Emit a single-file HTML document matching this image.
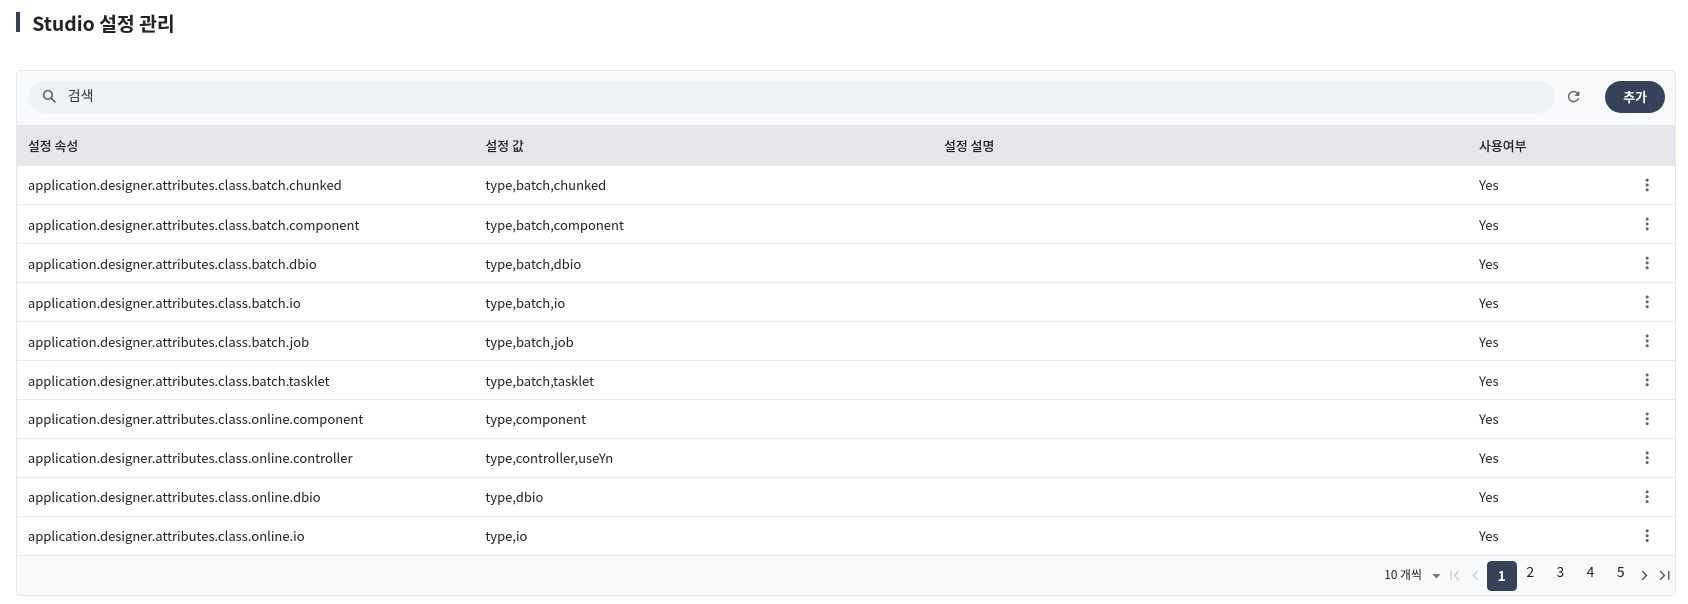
<!DOCTYPE html>
<html><head><meta charset="utf-8"><style>
*{box-sizing:border-box;margin:0;padding:0}
body{width:1688px;height:604px;background:#fff;font-family:"Noto Sans CJK KR","Liberation Sans",sans-serif;color:#222;position:relative;overflow:hidden}
.wrap{position:absolute;left:0;top:0;width:1568px;height:561px;zoom:1.0765}
.bar{position:absolute;left:15px;top:11px;width:4px;height:19px;background:#354259}
.title{position:absolute;left:30px;top:8px;font-size:18px;font-weight:700;color:#222;line-height:26px}
.card{position:absolute;left:15px;top:65px;width:1542px;height:489px;border:1px solid #e3e6ea;border-radius:5px;background:#f8f9fb;overflow:hidden}
.search{position:absolute;left:10px;top:9px;width:1419px;height:30px;background:#eef2f7;border-radius:15px}
.search span{position:absolute;left:37px;top:5px;font-size:13px;color:#333}
.add{position:absolute;left:1475px;top:9px;width:56px;height:30px;background:#354259;border-radius:15px;color:#fff;font-size:12px;font-weight:700;text-align:center;line-height:30px}
table{position:absolute;left:0;top:50px;width:1540px;border-collapse:collapse;font-size:12.1px}
th{background:#e5e7eb;height:38px;text-align:left;font-weight:500;font-size:12px;color:#222;padding-left:10px}
td{background:#fff;height:36.2px;padding-left:10px;border-bottom:1px solid #e8ecf0;color:#222}
.pg{position:absolute;top:456px;font-size:13px;color:#222}
.p1{position:absolute;left:1365px;top:455px;width:28px;height:28px;background:#354259;border-radius:4px;color:#fff;font-weight:700;text-align:center;line-height:28px;font-size:13px}
</style></head><body>
<div class="wrap">
<div class="bar"></div><div class="title">Studio 설정 관리</div>
<div class="card">
<div class="search"><svg style="position:absolute;left:13px;top:8px" width="14" height="14" viewBox="0 0 14 14"><circle cx="5.5" cy="5.5" r="4" fill="none" stroke="#666" stroke-width="1.5"/><path d="M8.5 8.5L12.5 12.5" stroke="#666" stroke-width="1.6"/></svg><span>검색</span></div>
<svg style="position:absolute;left:1438px;top:16px" width="16" height="16" viewBox="0 0 24 24"><path d="M17.65 6.35A7.96 7.96 0 0 0 12 4a8 8 0 1 0 7.73 10h-2.08A6 6 0 1 1 12 6c1.66 0 3.14.69 4.22 1.78L13 11h7V4l-2.35 2.35z" fill="#666"/></svg>
<div class="add">추가</div>
<table>
<tr><th style="width:425px">설정 속성</th><th style="width:426px">설정 값</th><th style="width:497px">설정 설명</th><th>사용여부</th></tr>
<tr><td>application.designer.attributes.class.batch.chunked</td><td>type,batch,chunked</td><td></td><td>Yes</td></tr>
<tr><td>application.designer.attributes.class.batch.component</td><td>type,batch,component</td><td></td><td>Yes</td></tr>
<tr><td>application.designer.attributes.class.batch.dbio</td><td>type,batch,dbio</td><td></td><td>Yes</td></tr>
<tr><td>application.designer.attributes.class.batch.io</td><td>type,batch,io</td><td></td><td>Yes</td></tr>
<tr><td>application.designer.attributes.class.batch.job</td><td>type,batch,job</td><td></td><td>Yes</td></tr>
<tr><td>application.designer.attributes.class.batch.tasklet</td><td>type,batch,tasklet</td><td></td><td>Yes</td></tr>
<tr><td>application.designer.attributes.class.online.component</td><td>type,component</td><td></td><td>Yes</td></tr>
<tr><td>application.designer.attributes.class.online.controller</td><td>type,controller,useYn</td><td></td><td>Yes</td></tr>
<tr><td>application.designer.attributes.class.online.dbio</td><td>type,dbio</td><td></td><td>Yes</td></tr>
<tr><td>application.designer.attributes.class.online.io</td><td>type,io</td><td></td><td>Yes</td></tr>
</table>
<svg style="position:absolute;left:1512px;top:99px" width="4" height="340">
<g fill="#666"><circle cx="2" cy="2" r="1.4"/><circle cx="2" cy="6.5" r="1.4"/><circle cx="2" cy="11" r="1.4"/></g>
<g fill="#666" transform="translate(0,36.2)"><circle cx="2" cy="2" r="1.4"/><circle cx="2" cy="6.5" r="1.4"/><circle cx="2" cy="11" r="1.4"/></g>
<g fill="#666" transform="translate(0,72.4)"><circle cx="2" cy="2" r="1.4"/><circle cx="2" cy="6.5" r="1.4"/><circle cx="2" cy="11" r="1.4"/></g>
<g fill="#666" transform="translate(0,108.6)"><circle cx="2" cy="2" r="1.4"/><circle cx="2" cy="6.5" r="1.4"/><circle cx="2" cy="11" r="1.4"/></g>
<g fill="#666" transform="translate(0,144.8)"><circle cx="2" cy="2" r="1.4"/><circle cx="2" cy="6.5" r="1.4"/><circle cx="2" cy="11" r="1.4"/></g>
<g fill="#666" transform="translate(0,181)"><circle cx="2" cy="2" r="1.4"/><circle cx="2" cy="6.5" r="1.4"/><circle cx="2" cy="11" r="1.4"/></g>
<g fill="#666" transform="translate(0,217.2)"><circle cx="2" cy="2" r="1.4"/><circle cx="2" cy="6.5" r="1.4"/><circle cx="2" cy="11" r="1.4"/></g>
<g fill="#666" transform="translate(0,253.4)"><circle cx="2" cy="2" r="1.4"/><circle cx="2" cy="6.5" r="1.4"/><circle cx="2" cy="11" r="1.4"/></g>
<g fill="#666" transform="translate(0,289.6)"><circle cx="2" cy="2" r="1.4"/><circle cx="2" cy="6.5" r="1.4"/><circle cx="2" cy="11" r="1.4"/></g>
<g fill="#666" transform="translate(0,325.8)"><circle cx="2" cy="2" r="1.4"/><circle cx="2" cy="6.5" r="1.4"/><circle cx="2" cy="11" r="1.4"/></g>
</svg>
<div class="pg" style="left:1270px;font-size:11px;top:460px">10 개씩</div>
<svg style="position:absolute;left:1313px;top:466px" width="10" height="6"><path d="M1 1h8L5 5z" fill="#777"/></svg>
<svg style="position:absolute;left:1330px;top:463px" width="12" height="12" viewBox="0 0 12 12"><path d="M2 2v8M9 2L5 6l4 4" fill="none" stroke="#ccc" stroke-width="1.3"/></svg>
<svg style="position:absolute;left:1350px;top:463px" width="10" height="12" viewBox="0 0 10 12"><path d="M7 2L3 6l4 4" fill="none" stroke="#ccc" stroke-width="1.3"/></svg>
<div class="p1">1</div>
<div class="pg" style="left:1402px">2</div>
<div class="pg" style="left:1430px">3</div>
<div class="pg" style="left:1458px">4</div>
<div class="pg" style="left:1486px">5</div>
<svg style="position:absolute;left:1507px;top:463px" width="10" height="12" viewBox="0 0 10 12"><path d="M3 2l4 4-4 4" fill="none" stroke="#555" stroke-width="1.3"/></svg>
<svg style="position:absolute;left:1524px;top:463px" width="12" height="12" viewBox="0 0 12 12"><path d="M2 2l4 4-4 4M10 2v8" fill="none" stroke="#555" stroke-width="1.3"/></svg>
</div>
</div>
</body></html>
